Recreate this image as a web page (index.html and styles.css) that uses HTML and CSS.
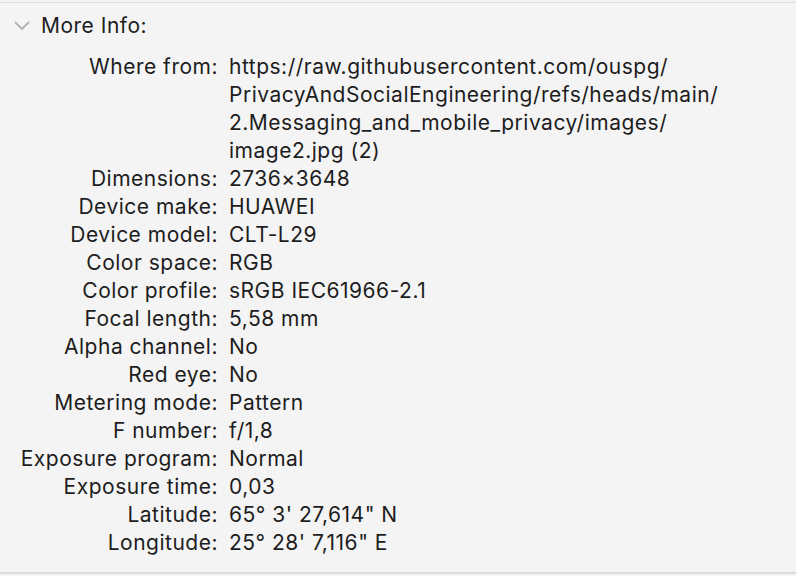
FILE: index.html
```html
<!DOCTYPE html>
<html>
<head>
<meta charset="utf-8">
<link rel="stylesheet" href="styles.css">
</head>
<body>
<div class="panel">
  <div class="header">
    <svg class="chevron" width="16" height="10" viewBox="0 0 16 10"><path d="M1.5 1.5 L8 8 L14.5 1.5" fill="none" stroke="#b4b4b4" stroke-width="1.8" stroke-linecap="round" stroke-linejoin="round"/></svg>
    <span class="title">More Info:</span>
  </div>
  <div class="grid">
    <div class="label">Where from:</div>
    <div class="value">https://raw.githubusercontent.com/ouspg/<br>PrivacyAndSocialEngineering/refs/heads/main/<br>2.Messaging_and_mobile_privacy/images/<br>image2.jpg (2)</div>
    <div class="label">Dimensions:</div><div class="value">2736×3648</div>
    <div class="label">Device make:</div><div class="value">HUAWEI</div>
    <div class="label">Device model:</div><div class="value">CLT-L29</div>
    <div class="label">Color space:</div><div class="value">RGB</div>
    <div class="label">Color profile:</div><div class="value">sRGB IEC61966-2.1</div>
    <div class="label">Focal length:</div><div class="value">5,58 mm</div>
    <div class="label">Alpha channel:</div><div class="value">No</div>
    <div class="label">Red eye:</div><div class="value">No</div>
    <div class="label">Metering mode:</div><div class="value">Pattern</div>
    <div class="label">F number:</div><div class="value">f/1,8</div>
    <div class="label">Exposure program:</div><div class="value">Normal</div>
    <div class="label">Exposure time:</div><div class="value">0,03</div>
    <div class="label">Latitude:</div><div class="value">65° 3' 27,614" N</div>
    <div class="label">Longitude:</div><div class="value">25° 28' 7,116" E</div>
  </div>
</div>
</body>
</html>
```
FILE: styles.css
```css
html, body {
  margin: 0;
  padding: 0;
  background: #f4f4f4;
}
body {
  font-family: Inter, "Noto Sans", sans-serif;
  font-size: 21px;
  letter-spacing: 0.5px;
  color: #1d1d1d;
  padding-top: 2px;
}
.panel {
  border-top: 1px solid #dcdcdc;
  border-bottom: 2px solid #dcdcdc;
  height: 572px;
  box-sizing: border-box;
}
.header {
  display: flex;
  align-items: center;
  height: 28px;
  padding-top: 9px;
  padding-left: 14px;
}
.chevron {
  margin-right: 11px;
  margin-top: -1px;
}
.title {
  line-height: 28px;
}
.grid {
  display: grid;
  grid-template-columns: 218px auto;
  column-gap: 11px;
  line-height: 28px;
  margin-top: 13px;
}
.label {
  text-align: right;
  white-space: nowrap;
}
.value {
  white-space: nowrap;
}
```
